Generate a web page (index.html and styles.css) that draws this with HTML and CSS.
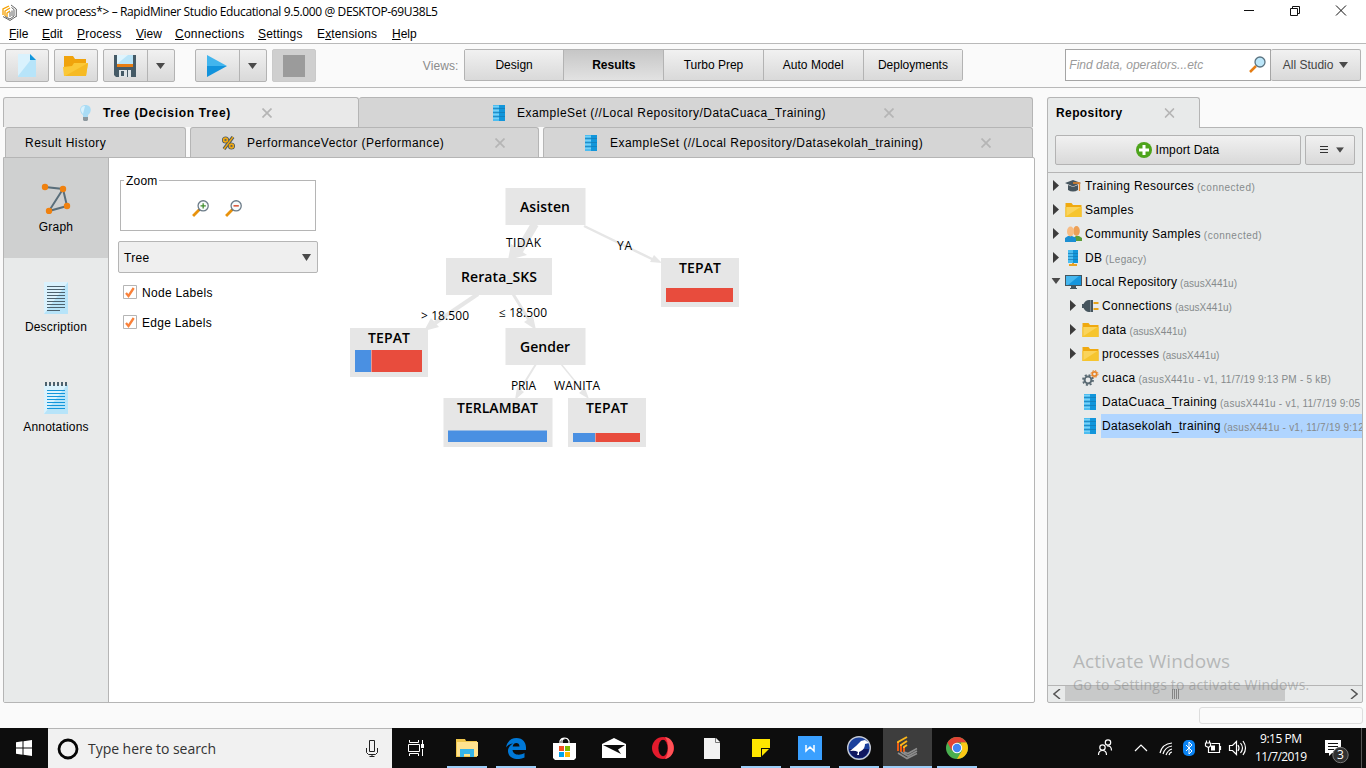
FILE: index.html
```html
<!DOCTYPE html>
<html lang="en">
<head>
<meta charset="utf-8">
<title>RapidMiner Studio</title>
<link rel="stylesheet" href="styles.css">
</head>
<body>
<svg class="defs" width="0" height="0">
  <symbol id="i-data" viewBox="0 0 12 16"><path fill="#4dbdf0" d="M0 0h6v16H0z"/><path fill="#1296db" d="M6 0h6v16H6z"/><path d="M0 3.500h12M0 7.500h12M0 11.500h12" stroke="#1479b4" stroke-opacity=".7"/><path d="M0 5.500h6M0 9.500h6M0 13.500h6M0 1.500h6" stroke="#79d0f6"/></symbol>
  <symbol id="i-folder" viewBox="0 0 16 14"><path fill="#f0a90f" d="M0 0h6l1.500 2H16v12H0z"/><path fill="#f6c52f" d="M0 4h16v10H0z"/><path fill="#fad45c" d="M1 4h14L1 13z"/></symbol>
  <symbol id="i-x" viewBox="0 0 10 10"><path d="M.5.5l9 9M9.500.5l-9 9" stroke="#b5b5b5" stroke-width="1.700"/></symbol>
  <symbol id="i-down" viewBox="0 0 9 6"><path d="M0 0h9L4.500 6z" fill="#4a4a4a"/></symbol>
  <symbol id="i-right" viewBox="0 0 6 11"><path d="M0 0l6 5.500L0 11z" fill="#3c3c3c"/></symbol>
  <symbol id="i-glass" viewBox="0 0 16 16"><path d="M1 15l6-6" stroke="#e8920c" stroke-width="2.600"/><path d="M6.500 9.500l1.500-1.500" stroke="#555f66" stroke-width="1.500"/><circle cx="10.500" cy="5.500" r="4.800" fill="#f7fafb" stroke="#6b7b88" stroke-width="1.200"/></symbol>
  <symbol id="i-paper" viewBox="0 0 24 32"><path fill="#b7e4f9" d="M0 0h24v32H0z"/><path fill="#daf2fd" d="M0 0h24L0 32z"/></symbol>
  <symbol id="i-check" viewBox="0 0 14 14"><path fill="#fff" stroke="#b5b5b5" d="M.5.5h13v13H.5z"/><path d="M3 8l2.500 3L10.700 3" stroke="#f9813a" stroke-width="2.300" fill="none"/></symbol>
</svg>

<header class="titlebar">
  <svg class="app-logo" width="16" height="17" viewBox="0 0 16 17"><path d="M1 11V5l6-3M3 12V7l5-3M5 13V9l3-2" fill="none" stroke="#f5a000" stroke-width="1.300"/><path d="M1 12.500l7 4 6-4M3 12.500l5 2.500 4-3M14.300 13V5L9 1M12 12V5.500L9.500 3.500M10 12V6.500M8 13V8" fill="none" stroke="#666" stroke-width="1"/></svg>
  <span class="title-text">&lt;new process*&gt; – RapidMiner Studio Educational 9.5.000 @ DESKTOP-69U38L5</span>
  <svg class="win-buttons" width="106" height="12" viewBox="0 0 106 12"><path d="M0 6.500h10M46.500 4.500h7v7h-7zM48.500 4.500v-2h7v7h-2M92 1.500l10 10M102 1.500l-10 10" fill="none" stroke="#111"/></svg>
</header>

<nav class="menubar">
  <span class="m-file"><u>F</u>ile</span><span class="m-edit"><u>E</u>dit</span><span class="m-process"><u>P</u>rocess</span><span class="m-view"><u>V</u>iew</span><span class="m-conn"><u>C</u>onnections</span><span class="m-set"><u>S</u>ettings</span><span class="m-ext">E<u>x</u>tensions</span><span class="m-help"><u>H</u>elp</span>
</nav>

<section class="toolbar">
  <div class="btn tool"><svg width="18" height="23" viewBox="0 0 18 23"><path fill="#b7e4f9" d="M0 0h12l6 6v17H0z"/><path fill="#daf2fd" d="M0 0h12l3 3L0 22z"/><path fill="#1296db" d="M12 0l6 6h-6z"/></svg></div>
  <div class="btn tool"><svg width="25" height="20" viewBox="0 0 25 20"><path fill="#f0a30c" d="M1 0h9l2 3h11v16H1z"/><path fill="#fbc837" d="M0 11l9-1 2-3h14l-2 13H1z"/><path fill="#f6ba24" d="M25 7l-2 13H2z"/></svg></div>
  <div class="btn split"><div class="split-main"><svg width="22" height="22" viewBox="0 0 22 22"><path fill="#455a66" d="M0 0h22v22H2l-2-2z"/><path fill="#b9e4f8" d="M3 0h16v9H3z"/><path fill="#dff4fd" d="M3 0h11L3 9z"/><path fill="#e87d12" d="M3 9h16v3H3z"/><path fill="#dfe5e8" d="M5 15h12v7H5z"/><path fill="#455a66" d="M7 16h3v5H7zM13 15h1v7h-1z"/></svg></div><div class="split-drop"><svg width="9" height="6"><use href="#i-down"/></svg></div></div>
  <div class="btn split run"><div class="split-main"><svg width="20" height="22" viewBox="0 0 20 22"><path fill="#42b5ed" d="M0 0l20 11H0z"/><path fill="#1293dc" d="M0 22l20-11H0z"/></svg></div><div class="split-drop"><svg width="9" height="6"><use href="#i-down"/></svg></div></div>
  <div class="btn tool stop"><i></i></div>
  <span class="views-label">Views:</span>
  <div class="views"><span><b class="n">Design</b></span><span class="on"><b>Results</b></span><span><b class="n">Turbo Prep</b></span><span><b class="n">Auto Model</b></span><span><b class="n">Deployments</b></span></div>
  <div class="search"><em>Find data, operators...etc</em><svg width="17" height="17" viewBox="0 0 17 17"><path d="M1 16l6-6" stroke="#e57d14" stroke-width="2.500"/><circle cx="11" cy="6" r="5" fill="#bce6f9" stroke="#5b7482" stroke-width="1.300"/></svg></div>
  <div class="btn all"><span>All Studio</span><svg width="9" height="6"><use href="#i-down"/></svg></div>
</section>

<main class="workspace">
  <section class="results">
    <div class="tabs row1">
      <div class="tab active t-tree"><svg class="tab-icon" width="11" height="16" viewBox="0 0 11 16"><path fill="#a9dcf5" d="M3 10C-1 7-1 0 5.500 0S12 7 8 10v2H3z"/><path fill="#daf2fd" d="M3 9C0 6 0 1 5 1z"/><path fill="#8c989e" d="M3 12h5v3l-1 1H4l-1-1z"/></svg><b class="tab-tree">Tree (Decision Tree)</b><svg class="x" width="10" height="10"><use href="#i-x"/></svg></div>
      <div class="tab t-cuaca"><svg class="tab-icon" width="12" height="16"><use href="#i-data"/></svg><span class="tab-cuaca">ExampleSet (//Local Repository/DataCuaca_Training)</span><svg class="x" width="10" height="10"><use href="#i-x"/></svg></div>
    </div>
    <div class="tabs row2">
      <div class="tab t-hist"><span class="tab-hist">Result History</span></div>
      <div class="tab t-perf"><svg class="tab-icon" width="13" height="14" viewBox="0 0 13 14"><path d="M2 13L11 1" stroke="#4b5b63" stroke-width="3.500"/><g fill="none" stroke="#4b5b63" stroke-width="3.400"><circle cx="3.500" cy="4" r="1.900"/><circle cx="9.500" cy="10" r="1.900"/></g><path d="M2 13L11 1" stroke="#f3a80e" stroke-width="1.300"/><g fill="none" stroke="#f3a80e" stroke-width="1.600"><circle cx="3.500" cy="4" r="1.900"/><circle cx="9.500" cy="10" r="1.900"/></g></svg><span class="tab-perf">PerformanceVector (Performance)</span><svg class="x" width="10" height="10"><use href="#i-x"/></svg></div>
      <div class="tab t-sek"><svg class="tab-icon" width="12" height="16"><use href="#i-data"/></svg><span class="tab-sek">ExampleSet (//Local Repository/Datasekolah_training)</span><svg class="x" width="10" height="10"><use href="#i-x"/></svg></div>
    </div>
    <div class="result-body">
      <aside class="side">
        <div class="side-item on"><svg width="30" height="32" viewBox="0 0 30 32"><path d="M4 5l18 2 4 17-18 5L22 7" fill="none" stroke="#5a6e7a" stroke-width="2"/><g fill="#f0810f"><circle cx="4" cy="5" r="3.200"/><circle cx="22" cy="7" r="3.200"/><circle cx="26" cy="24" r="3.200"/><circle cx="8" cy="29" r="3.200"/></g></svg><span class="l-graph">Graph</span></div>
        <div class="side-item"><svg width="24" height="32" viewBox="0 0 24 32"><use href="#i-paper"/><path d="M3 4.500h18M3 7.500h18M3 10.500h18M3 13.500h18M3 16.500h18M3 19.500h18M3 22.500h18M3 25.500h18M3 28.500h13" stroke="#4d626e"/></svg><span class="l-desc">Description</span></div>
        <div class="side-item"><svg width="24" height="32" viewBox="0 0 24 32"><path d="M0 3h24v29H0z" fill="#b7e4f9"/><path fill="#daf2fd" d="M0 3h23L0 32z"/><path d="M1 2h23" stroke="#4d626e" stroke-width="4" stroke-dasharray="2 2"/><path d="M3 8.500h18M3 11.500h18M3 14.500h18M3 17.500h18M3 20.500h18M3 23.500h18M3 26.500h18" stroke="#1296db"/></svg><span class="l-ann">Annotations</span></div>
      </aside>
      <div class="controls">
        <fieldset class="zoom"><legend>Zoom</legend><svg width="17" height="17" viewBox="0 0 16 16"><use href="#i-glass"/><path d="M8 5.500h5M10.500 3v5" stroke="#3f8c2c" stroke-width="1.200"/></svg><svg width="17" height="17" viewBox="0 0 16 16"><use href="#i-glass"/><path d="M8 5.500h5" stroke="#d84a2b" stroke-width="1.400"/></svg></fieldset>
        <div class="select"><span>Tree</span><svg width="9" height="7" viewBox="0 0 9 6" preserveAspectRatio="none"><use href="#i-down"/></svg></div>
        <div class="check"><svg width="14" height="14"><use href="#i-check"/></svg><span>Node Labels</span></div>
        <div class="check"><svg width="14" height="14"><use href="#i-check"/></svg><span>Edge Labels</span></div>
      </div>
      <svg class="graph" width="400" height="280" viewBox="345 180 400 280">
        <g stroke="#e6e6e6" fill="none"><path d="M535 224l-16 27" stroke-width="8"/><path d="M584 226l70 34" stroke-width="2.500"/><path d="M478 294l-43 29" stroke-width="4"/><path d="M513 294l16 26" stroke-width="3"/><path d="M536 364l-16 26" stroke-width="2"/><path d="M561 364l22 27" stroke-width="1.500"/></g>
        <g fill="#e6e6e6"><path d="M508 260l3-16 16 11z"/><path d="M662 263l-12-1 4-7z"/><path d="M424 331l7-13 8 9z"/><path d="M536 330l-12-8 9-6z"/><path d="M515 400l2-13 7 5z"/><path d="M589 399l-10-6 6-5z"/></g>
        <g fill="#e6e6e6"><path d="M505.500 188h80v37h-80z"/><path d="M446 258h106v37H446z"/><path d="M505.500 328h80v37h-80z"/><path d="M661 258h78v49h-78z"/><path d="M350 328h78v49h-78z"/><path d="M443.500 398h109v49h-109z"/><path d="M568 398h78v49h-78z"/></g>
        <path fill="#e84c3d" d="M666 288h67v14h-67zM371.500 350H422v22h-50.500zM595.500 433H640v9h-44.500z"/><path fill="#4a90e2" d="M355 350h16v22h-16zM573 433h22v9h-22zM448 430.500h99V442h-99z"/>
        <g class="node"><text x="520" y="212" textLength="50">Asisten</text><text x="461" y="282" textLength="76">Rerata_SKS</text><text x="520" y="352" textLength="50">Gender</text><text x="679" y="273" textLength="42">TEPAT</text><text x="368" y="343" textLength="42">TEPAT</text><text x="457" y="413" textLength="81">TERLAMBAT</text><text x="586" y="413" textLength="42">TEPAT</text></g>
        <g class="edge"><text x="506" y="247" textLength="35">TIDAK</text><text x="617" y="250" textLength="15">YA</text><text x="421" y="320" textLength="48">&gt; 18.500</text><text x="499" y="317" textLength="48">≤ 18.500</text><text x="511" y="390" textLength="25">PRIA</text><text x="554" y="390" textLength="46">WANITA</text></g>
      </svg>
    </div>
  </section>

  <section class="repo">
    <div class="repo-tab"><b>Repository</b><svg class="x" width="11" height="10" viewBox="0 0 10 10"><use href="#i-x"/></svg></div>
    <div class="repo-body">
      <div class="repo-actions"><div class="btn import"><svg width="16" height="16" viewBox="0 0 16 16"><circle cx="8" cy="8" r="8" fill="#4ea41c"/><path d="M8 3v10M3 8h10" stroke="#fff" stroke-width="3"/></svg><span>Import Data</span></div><div class="btn more"><svg width="8" height="8" viewBox="0 0 8 8"><path d="M0 .5h8M0 3.500h8M0 6.500h8" stroke="#333"/></svg><svg width="8" height="6" viewBox="0 0 9 6"><use href="#i-down"/></svg></div></div>
      <div class="tree">
        <div class="row"><svg class="arr" width="6" height="11"><use href="#i-right"/></svg><svg class="ico" width="17" height="12" viewBox="0 0 17 12"><path fill="#46555e" d="M0 3l8-3 8 3-8 3.500zM3 5l5 2 5-2v5q-5 3-10 0z"/><path d="M8 3h6.500v8" fill="none" stroke="#e8862a" stroke-width="1.300"/></svg><span>Training Resources</span><small class="s1">(connected)</small></div>
        <div class="row"><svg class="arr" width="6" height="11"><use href="#i-right"/></svg><svg class="ico" width="17" height="14"><use href="#i-folder"/></svg><span>Samples</span></div>
        <div class="row"><svg class="arr" width="6" height="11"><use href="#i-right"/></svg><svg class="ico" width="17" height="16" viewBox="0 0 17 16"><path fill="#5d9e38" d="M8 15v-3l3-2h3l3 2v3z"/><ellipse cx="11.500" cy="5" rx="3.300" ry="5" fill="#eda056"/><path fill="#1c8fd2" d="M0 16v-4l3-2h4l4 2v4z"/><ellipse cx="5.500" cy="5.500" rx="3.500" ry="5" fill="#f7bc83"/></svg><span>Community Samples</span><small class="s1">(connected)</small></div>
        <div class="row"><svg class="arr" width="6" height="11"><use href="#i-right"/></svg><svg class="ico" width="17" height="16" viewBox="0 0 17 16"><path fill="#4dbdf0" d="M3 0h5v13H3z"/><path fill="#1296db" d="M8 0h5v13H8z"/><path d="M3 3.500h10M3 6.500h10M3 9.500h10" stroke="#1479b4" stroke-opacity=".7"/><path fill="#e9a325" d="M4 14h8v2H4zM7 13h2v3H7z"/></svg><span>DB</span><small class="s2">(Legacy)</small></div>
        <div class="row"><svg class="arr open" width="10" height="6" viewBox="0 0 9 6"><use href="#i-down"/></svg><svg class="ico" width="17" height="14" viewBox="0 0 17 14"><path fill="#45565f" d="M0 0h17v11h-6v2h1v1H5v-1h1v-2H0z"/><path fill="#1696de" d="M1 1h15v9H1z"/><path fill="#45b7ef" d="M1 1h13L3 10H1z"/></svg><span class="w5">Local Repository</span><small class="s3">(asusX441u)</small></div>
        <div class="row sub"><svg class="arr" width="6" height="11"><use href="#i-right"/></svg><svg class="ico" width="17" height="12" viewBox="0 0 17 12"><path fill="#46555e" d="M0 4h1.500q2-4 5.500-4h4v12H7q-3.500 0-5.500-4H0z"/><path stroke="#e6a319" stroke-width="2" d="M11.500 3h5M11.500 9h5"/><path d="M8.500 0v12" stroke="#7c8b93"/></svg><span>Connections</span><small class="s3">(asusX441u)</small></div>
        <div class="row sub"><svg class="arr" width="6" height="11"><use href="#i-right"/></svg><svg class="ico" width="17" height="14"><use href="#i-folder"/></svg><span>data</span><small class="s3">(asusX441u)</small></div>
        <div class="row sub"><svg class="arr" width="6" height="11"><use href="#i-right"/></svg><svg class="ico" width="17" height="14"><use href="#i-folder"/></svg><span>processes</span><small class="s3">(asusX441u)</small></div>
        <div class="row sub"><i class="arr"></i><svg class="ico" width="17" height="16" viewBox="0 0 17 16"><circle cx="6" cy="10" r="3.400" fill="none" stroke="#5b6b74" stroke-width="2"/><circle cx="6" cy="10" r="5" fill="none" stroke="#5b6b74" stroke-width="1.800" stroke-dasharray="2 1.930"/><circle cx="12.500" cy="4" r="2.200" fill="none" stroke="#e8862a" stroke-width="1.700"/><circle cx="12.500" cy="4" r="3.500" fill="none" stroke="#e8862a" stroke-dasharray="1.500 1.250"/></svg><span>cuaca</span><small class="s4">(asusX441u - v1, 11/7/19 9:13 PM - 5 kB)</small></div>
        <div class="row sub"><i class="arr"></i><svg class="ico" width="17" height="16" viewBox="0 0 17 16"><use href="#i-data" x="2" width="12" height="16"/></svg><span>DataCuaca_Training</span><small class="s5">(asusX441u - v1, 11/7/19 9:05</small></div>
        <div class="row sub"><i class="arr"></i><svg class="ico" width="17" height="16" viewBox="0 0 17 16"><use href="#i-data" x="2" width="12" height="16"/></svg><div class="sel"><span>Datasekolah_training</span><small class="s5">(asusX441u - v1, 11/7/19 9:12</small></div></div>
      </div>
      <div class="hscroll"><svg width="8" height="10" viewBox="0 0 8 10"><path d="M7 0L1 5l6 5" fill="none" stroke="#555" stroke-width="1.500"/></svg><div class="track"><div class="thumb"><i></i><i></i><i></i><i></i></div></div><svg width="8" height="10" viewBox="0 0 8 10"><path d="M1 0l6 5-6 5" fill="none" stroke="#555" stroke-width="1.500"/></svg></div>
      <div class="watermark"><p class="wm1">Activate Windows</p><p class="wm2">Go to Settings to activate Windows.</p></div>
    </div>
  </section>
</main>
<div class="status"><div></div></div>

<footer class="taskbar">
  <div class="start"><svg width="16" height="16" viewBox="0 0 16 16"><path fill="#fff" d="M0 2.200l6.500-.9v6.200H0zM7.500 1.200L16 0v7.500H7.500zM0 8.500h6.500v6.200L0 13.800zM7.500 8.500H16V16l-8.500-1.200z"/></svg></div>
  <div class="tsearch"><svg width="22" height="22" viewBox="0 0 22 22"><circle cx="11" cy="11" r="9" fill="none" stroke="#050505" stroke-width="2.800"/></svg><span>Type here to search</span><svg width="12" height="17" viewBox="0 0 12 17"><path d="M3.500.5h5v11h-5zM.5 8v4.500l2 2h7l2-2V8M6 14.500V17M3.500 16.500h5" fill="none" stroke="#222"/></svg></div>
  <div class="app tv"><svg width="17" height="16" viewBox="0 0 17 16"><path d="M1.500 0v2.500h9V0M1.500 16v-2.500h9V16M.5 4.500h11v7H.5zM14.500 0v4M14.500 9v7" fill="none" stroke="#fff"/><path fill="#fff" d="M13 4h3v4h-3z"/></svg></div>
  <div class="app run"><svg width="22" height="20" viewBox="0 0 22 20"><path fill="#efc64c" d="M0 1h9l1 2h11v16H0z"/><path fill="#ffe38f" d="M1 4h21v14H1z"/><path fill="#36b5e8" d="M4 19v-8h14v8h-4v-3H8v3z"/></svg></div>
  <div class="app run"><svg width="20" height="21" viewBox="0 0 20 21"><path fill="#0078d7" d="M0 9.500C1 3.500 5 0 10.500 0 17 0 20 5 20 9.500V12H6.500c.5 5 7 6 12 3v4.500C11 23 2.500 20.500 2 13.500 1.800 10 4 7 7 5.500 3.500 6 1.500 7.500 0 9.500zM6.700 8.500h6.800C13.500 3.800 7.300 4 6.700 8.500z"/></svg></div>
  <div class="app"><svg width="23" height="23" viewBox="0 0 23 23"><path d="M7 8V4q1-3 4.500-3T16 4v4M9 7V4q0-2 2.500-2" fill="none" stroke="#fff" stroke-width="1.200"/><path fill="#fff" d="M0 6h23v15l-2 2H2l-2-2z"/><path fill="#f25022" d="M6 9h5v5H6z"/><path fill="#7fba00" d="M12 9h5v5h-5z"/><path fill="#00a4ef" d="M6 15h5v5H6z"/><path fill="#ffb900" d="M12 15h5v5h-5z"/></svg></div>
  <div class="app"><svg width="24" height="20" viewBox="0 0 24 20"><path fill="#fff" d="M0 6l12-6 12 6v14H0z"/><path fill="#0d0d0d" d="M1 7h22l-7 4.500 3 4.500z"/></svg></div>
  <div class="app"><svg width="22" height="22" viewBox="0 0 22 22"><ellipse cx="11" cy="11" rx="11" ry="11" fill="#e31b2d"/><path fill="#ff5257" d="M13 0c11 1 12 20 0 22 4-5 4-17 0-22z"/><ellipse cx="11" cy="11" rx="4.600" ry="8.300" fill="#0d0d0d"/></svg></div>
  <div class="app"><svg width="16" height="21" viewBox="0 0 16 21"><path fill="#f2f2f2" d="M0 0h12l4 4v17H0z"/><path d="M11.500 0v4.500H16" fill="none" stroke="#777"/></svg></div>
  <div class="app run"><svg width="18" height="18" viewBox="0 0 18 18"><path fill="#ffe600" d="M0 0h18v9H9v9H0z"/><path fill="#ffe600" d="M10 18H9V9h9v1z"/><path fill="#0d0d0d" d="M9 9h9v9H9z"/><path fill="#ffe600" d="M10 10h7l-7 7z"/></svg></div>
  <div class="app run"><svg width="24" height="24" viewBox="0 0 24 24"><path fill="#3aa0ff" d="M0 0h24v24H0z"/><path d="M8 9v6l4-4 4 4V9" fill="none" stroke="#fff" stroke-width="1.500"/></svg></div>
  <div class="app run"><svg width="24" height="24" viewBox="0 0 24 24"><circle cx="12" cy="12" r="11.300" fill="#1a3f9c" stroke="#c5cad6" stroke-width="1.400"/><path fill="#10175f" d="M2 13h20q-2 9-10 9T2 13z"/><path fill="#fff" d="M3 15l6-5 5-5 4-1 4 3-4 1q0 5-4 7l-2 1v3h-2l1-3q-3-2-8-1z"/></svg></div>
  <div class="app run active"><svg width="22" height="24" viewBox="0 0 22 24"><path d="M1 14V6L10 1M4 15V9l6-4M7 16v-5l3-2" fill="none" stroke="#fbb51a" stroke-width="2"/><path d="M1 7v8M4 10v6M7 12v4" stroke="#ed5b12" stroke-width="2"/><path d="M1 17l9 5.500 10-5M4 16l7 4 9-5M7 16l4 1.500 9-5" fill="none" stroke="#8d8d8d" stroke-width="1.600"/></svg></div>
  <div class="app run"><svg width="22" height="22" viewBox="0 0 22 22"><circle cx="11" cy="11" r="11" fill="#4aaf50"/><path fill="#e24335" d="M1.500 5.500A11 11 0 0 1 20.500 5.500H11L6 14z"/><path fill="#fbc815" d="M20.500 5.500A11 11 0 0 1 11 22l5-8.500-1-8z"/><circle cx="11" cy="11" r="5.200" fill="#fff"/><circle cx="11" cy="11" r="4.200" fill="#4285f4"/></svg></div>
  <div class="tray">
    <svg width="320" height="40" viewBox="1046 728 320 40"><g fill="none" stroke="#fff" stroke-width="1.200"><circle cx="1102.500" cy="747.500" r="2.700"/><path d="M1098.500 755q0-4.500 4-4.500t4 4.500"/><circle cx="1108" cy="742.500" r="2.700"/><path d="M1107 746q4.500-.5 4.500 4.500"/><path d="M1135 751l6-6 6 6"/><path d="M1160 753q2-9 12-10M1163 754q2-7 9-8M1166 755q2-5 6-6M1169 755q1-3 3-3"/><path d="M1211.500 743.500h8v9h-11v-5M1220.500 746v4M1205.500 743h5v3l-2 1.500-3-1.500zM1206.500 740.500v2.500M1209.500 740.500v2.500"/><path d="M1229.500 745.500h3l4-4v13l-4-4h-3zM1238 745q2 3 0 6M1240.500 743q4 5 0 10M1243 741q5 7 0 14"/></g><path fill="#fff" d="M1211 745.500h4v5h-4z"/><rect x="1183" y="740" width="12" height="16" rx="5" fill="#0a84f5"/><path d="M1186 745l6 6-3 3v-12l3 3-6 6" fill="none" stroke="#fff"/><path fill="#fff" d="M1325 740h16v13h-9l-3 3v-3h-4z"/><path d="M1328 743.500h10M1328 746.500h10M1328 749.500h6" stroke="#111"/><circle cx="1340.500" cy="755" r="7.700" fill="#303030" stroke="#777"/><path d="M1361.500 728v40" stroke="#555"/><g class="clock"><text x="1260" y="743" textLength="42">9:15 PM</text><text x="1255" y="761" textLength="52">11/7/2019</text><text x="1337" y="759">3</text></g></svg>
  </div>
</footer>
</body>
</html>
```
FILE: styles.css
```css
* { box-sizing: border-box; }
html, body { margin: 0; width: 1366px; height: 768px; overflow: hidden; }
body { display: flex; flex-direction: column; background: #fafafa; color: #000; font: 12px "Liberation Sans", Arial, sans-serif; white-space: nowrap; }
svg { display: block; flex: none; }
.defs { position: absolute; }
small { font-size: 10px; color: #868a8c; }

.titlebar { height: 24px; background: #fff; display: flex; align-items: center; padding-left: 2px; }
.title-text { margin: -2px 0 0 6px; font: 12px "Open Sans", sans-serif; letter-spacing: -.38px; }
.win-buttons { margin-left: auto; margin-right: 16px; margin-top: -4px; }

.menubar { height: 19px; background: #fff; display: flex; align-items: center; padding-left: 9px; }
.menubar span { flex: none; height: 15px; line-height: 17px; }
.m-file { width: 33px; } .m-edit { width: 35px; } .m-process { width: 59px; letter-spacing: .2px; } .m-view { width: 39px; }
.m-conn { width: 83px; letter-spacing: .25px; } .m-set { width: 59px; letter-spacing: .15px; } .m-ext { width: 75px; letter-spacing: .15px; }

.toolbar { height: 45px; border-top: 1px solid #b9b9b9; border-bottom: 1px solid #b9b9b9; display: flex; padding: 5px 5px 0; }
.btn { border: 1px solid #b3b3b3; border-radius: 2px; background: linear-gradient(#f1f1f1, #d9d9d9); display: flex; align-items: center; justify-content: center; }
.toolbar .btn { height: 33px; }
.tool { width: 44px; margin-right: 5px; }
.split { width: 72px; margin-right: 20px; align-items: stretch; }
.split-main { width: 44px; border-right: 1px solid #b3b3b3; display: flex; align-items: center; justify-content: center; }
.split-drop { flex: 1; display: flex; align-items: center; justify-content: center; }
.split.run { margin-right: 5px; }
.stop { background: #cfcfcf; border-color: #cacaca; }
.stop i { width: 22px; height: 22px; background: #9b9b9b; }
.views-label { width: 41px; margin-left: 102px; line-height: 34px; color: #8b8b8b; letter-spacing: .1px; }
.views { width: 500px; height: 32px; display: flex; border: 1px solid #b3b3b3; border-radius: 2px; }
.views span { flex: 1; background: linear-gradient(#f1f1f1, #d9d9d9); line-height: 30px; text-align: center; border-right: 1px solid #b3b3b3; }
.views span:last-child { border-right: 0; }
.views .on { background: linear-gradient(#c6c6c6, #e2e2e2); }
.n { font-weight: normal; }
.search { width: 206px; height: 32px; margin-left: 102px; border: 1px solid #a5a5a5; background: #fff; display: flex; align-items: center; justify-content: space-between; padding: 0 4px 0 3px; color: #9a9a9a; letter-spacing: .02px; }
.search svg { margin-bottom: 2px; }
.toolbar .all { width: 90px; height: 32px; border-left: 0; gap: 6px; color: #444; }

.workspace { height: 615px; padding: 9px 3px 0; display: flex; gap: 12px; }
.results { width: 1032px; height: 606px; display: flex; flex-direction: column; }
.tabs { display: flex; width: 1030px; height: 30px; flex: none; }
.row2 { padding-left: 2px; gap: 4px; }
.tab { height: 30px; display: flex; align-items: center; background: #d5d5d5; border: 1px solid #b5b5b5; border-bottom: 0; border-radius: 3px 3px 0 0; }
.active { background: #e9e9e9; }
.x { margin-left: auto; }
.t-tree { width: 356px; padding: 0 86px 0 76px; }
.t-cuaca { width: 674px; border-left: 0; padding: 0 138px 0 134px; }
.t-hist { width: 181px; padding-left: 19px; }
.t-perf { width: 349px; padding: 0 33px 0 31px; }
.t-sek { width: 490px; padding: 0 41px 0 41px; }
.tab-icon { margin-right: 12px; }
.tab-tree { letter-spacing: .7px; }
.tab-cuaca, .tab-sek { letter-spacing: .48px; }
.tab-perf, .tab-hist { letter-spacing: .47px; }
.t-sek .tab-sek { margin-left: 1px; }
.result-body { height: 546px; border: 1px solid #b5b5b5; border-radius: 0 2px 2px 2px; background: #fff; display: flex; align-items: flex-start; }
.side { width: 105px; height: 544px; background: #e8eaea; border-right: 1px solid #b5b5b5; }
.side-item { height: 100px; padding-top: 24px; display: flex; flex-direction: column; align-items: center; gap: 6px; letter-spacing: .2px; }
.side-item.on { background: #cfd0d0; }
.controls { width: 209px; padding: 15px 0 0 9px; }
.zoom { width: 196px; height: 58px; margin: 0 0 0 2px; padding: 12px 0 0 0; border: 1px solid #b5b5b5; display: flex; justify-content: center; align-items: flex-start; gap: 16px; }
.zoom svg { position: relative; left: -1px; }
.zoom legend { margin-left: 3px; padding: 0 2px; height: 15px; line-height: 17px; letter-spacing: .2px; }
.select { width: 200px; height: 32px; margin-top: 10px; border: 1px solid #b5b5b5; border-radius: 2px; background: #efefef; display: flex; align-items: center; justify-content: space-between; padding: 2px 6px 0 5px; letter-spacing: .3px; }
.select svg { margin-bottom: 2px; }
.check { height: 14px; margin: 12px 0 16px 5px; display: flex; align-items: center; gap: 5px; letter-spacing: .3px; }
.check span { padding-top: 2px; }
.graph { margin: 22px 0 0 27px; }
.graph text { font-family: "Open Sans", sans-serif; }
.node { font-size: 14px; font-weight: 600; } .edge { font-size: 12px; }

.repo { width: 316px; display: flex; flex-direction: column; }
.repo-tab { width: 153px; height: 31px; margin-bottom: -1px; padding: 0 24px 0 8px; display: flex; align-items: center; background: #e8eaea; border: 1px solid #b5b5b5; border-bottom: 0; border-radius: 3px 3px 0 0; letter-spacing: .4px; z-index: 1; }
.repo-body { height: 576px; border: 1px solid #b5b5b5; border-radius: 0 2px 2px 2px; background: #e8eaea; position: relative; }
.repo-actions { height: 45px; padding: 7px 7px 0; display: flex; gap: 4px; border-bottom: 1px solid #b5b5b5; }
.repo-actions .btn { height: 30px; }
.import { width: 246px; gap: 4px; padding-right: 1px; letter-spacing: .1px; }
.more { width: 50px; gap: 8px; padding-left: 4px; }
.tree { height: 512px; padding-top: 1px; overflow: hidden; }
.row { height: 24px; display: flex; align-items: center; padding-left: 5px; }
.row.sub { padding-left: 22px; }
.arr { flex: none; width: 6px; margin: -2px 6px 0 0; } .arr.open { width: 10px; margin: -2px 4px 0 -2px; }
.ico { margin-right: 3px; }
.row span { letter-spacing: .3px; margin-right: 3px; }
.row .w5 { letter-spacing: .17px; }
.row small { padding-top: 3px; }
.s1 { letter-spacing: .5px; } .s2 { letter-spacing: .3px; } .s3 { letter-spacing: .02px; } .s4 { letter-spacing: .23px; } .s5 { letter-spacing: .24px; }
.sel { height: 24px; flex: 1; display: flex; align-items: center; background: #b0d5ff; margin-left: -1px; padding-left: 1px; }
.hscroll { height: 17px; border-top: 1px solid #b5b5b5; display: flex; align-items: center; padding: 0 4px 0 5px; }
.track { flex: 1; margin: 0 4px; height: 16px; }
.thumb { width: 220px; height: 15px; background: #c8c9c9; display: flex; gap: 1px; justify-content: center; align-items: center; }
.thumb i { width: 1px; height: 10px; background: #858585; }
.watermark { position: absolute; left: 25px; top: 520px; color: rgba(130, 132, 132, .5); font-family: "Open Sans", sans-serif; }
.watermark p { margin: 0; }
.wm1 { font-size: 19px; line-height: 27px; letter-spacing: .07px; } .wm2 { font-size: 14px; line-height: 20px; letter-spacing: .2px; }

.status { height: 25px; padding: 4px 3px 0 0; display: flex; justify-content: flex-end; }
.status div { width: 164px; height: 17px; border: 1px solid #ddd; border-radius: 3px; }

.taskbar { height: 40px; background: #0d0d0d; display: flex; color: #fff; }
.start { width: 48px; display: grid; place-items: center; }
.tsearch { width: 344px; background: #f1f1f1; border-top: 1px solid #b5b5b5; color: #333; display: flex; align-items: center; padding: 0 14px 0 9px; font: 14px "Open Sans", sans-serif; }
.tsearch span { margin-left: 9px; letter-spacing: -.04px; } .tsearch svg:last-child { margin-left: auto; }
.app { width: 49px; height: 40px; display: flex; align-items: center; justify-content: center; background: linear-gradient(#9ccdf8, #9ccdf8) center bottom / 0 2px no-repeat; }
.app.tv { width: 50px; padding-right: 2px; }
.app.run { background-size: 40px 2px; }
.app.active { background-color: #3d3d3d; background-size: 49px 2px; }
.tray { margin-left: auto; }
.clock { font: 12px "Open Sans", sans-serif; fill: #fff; }
```
